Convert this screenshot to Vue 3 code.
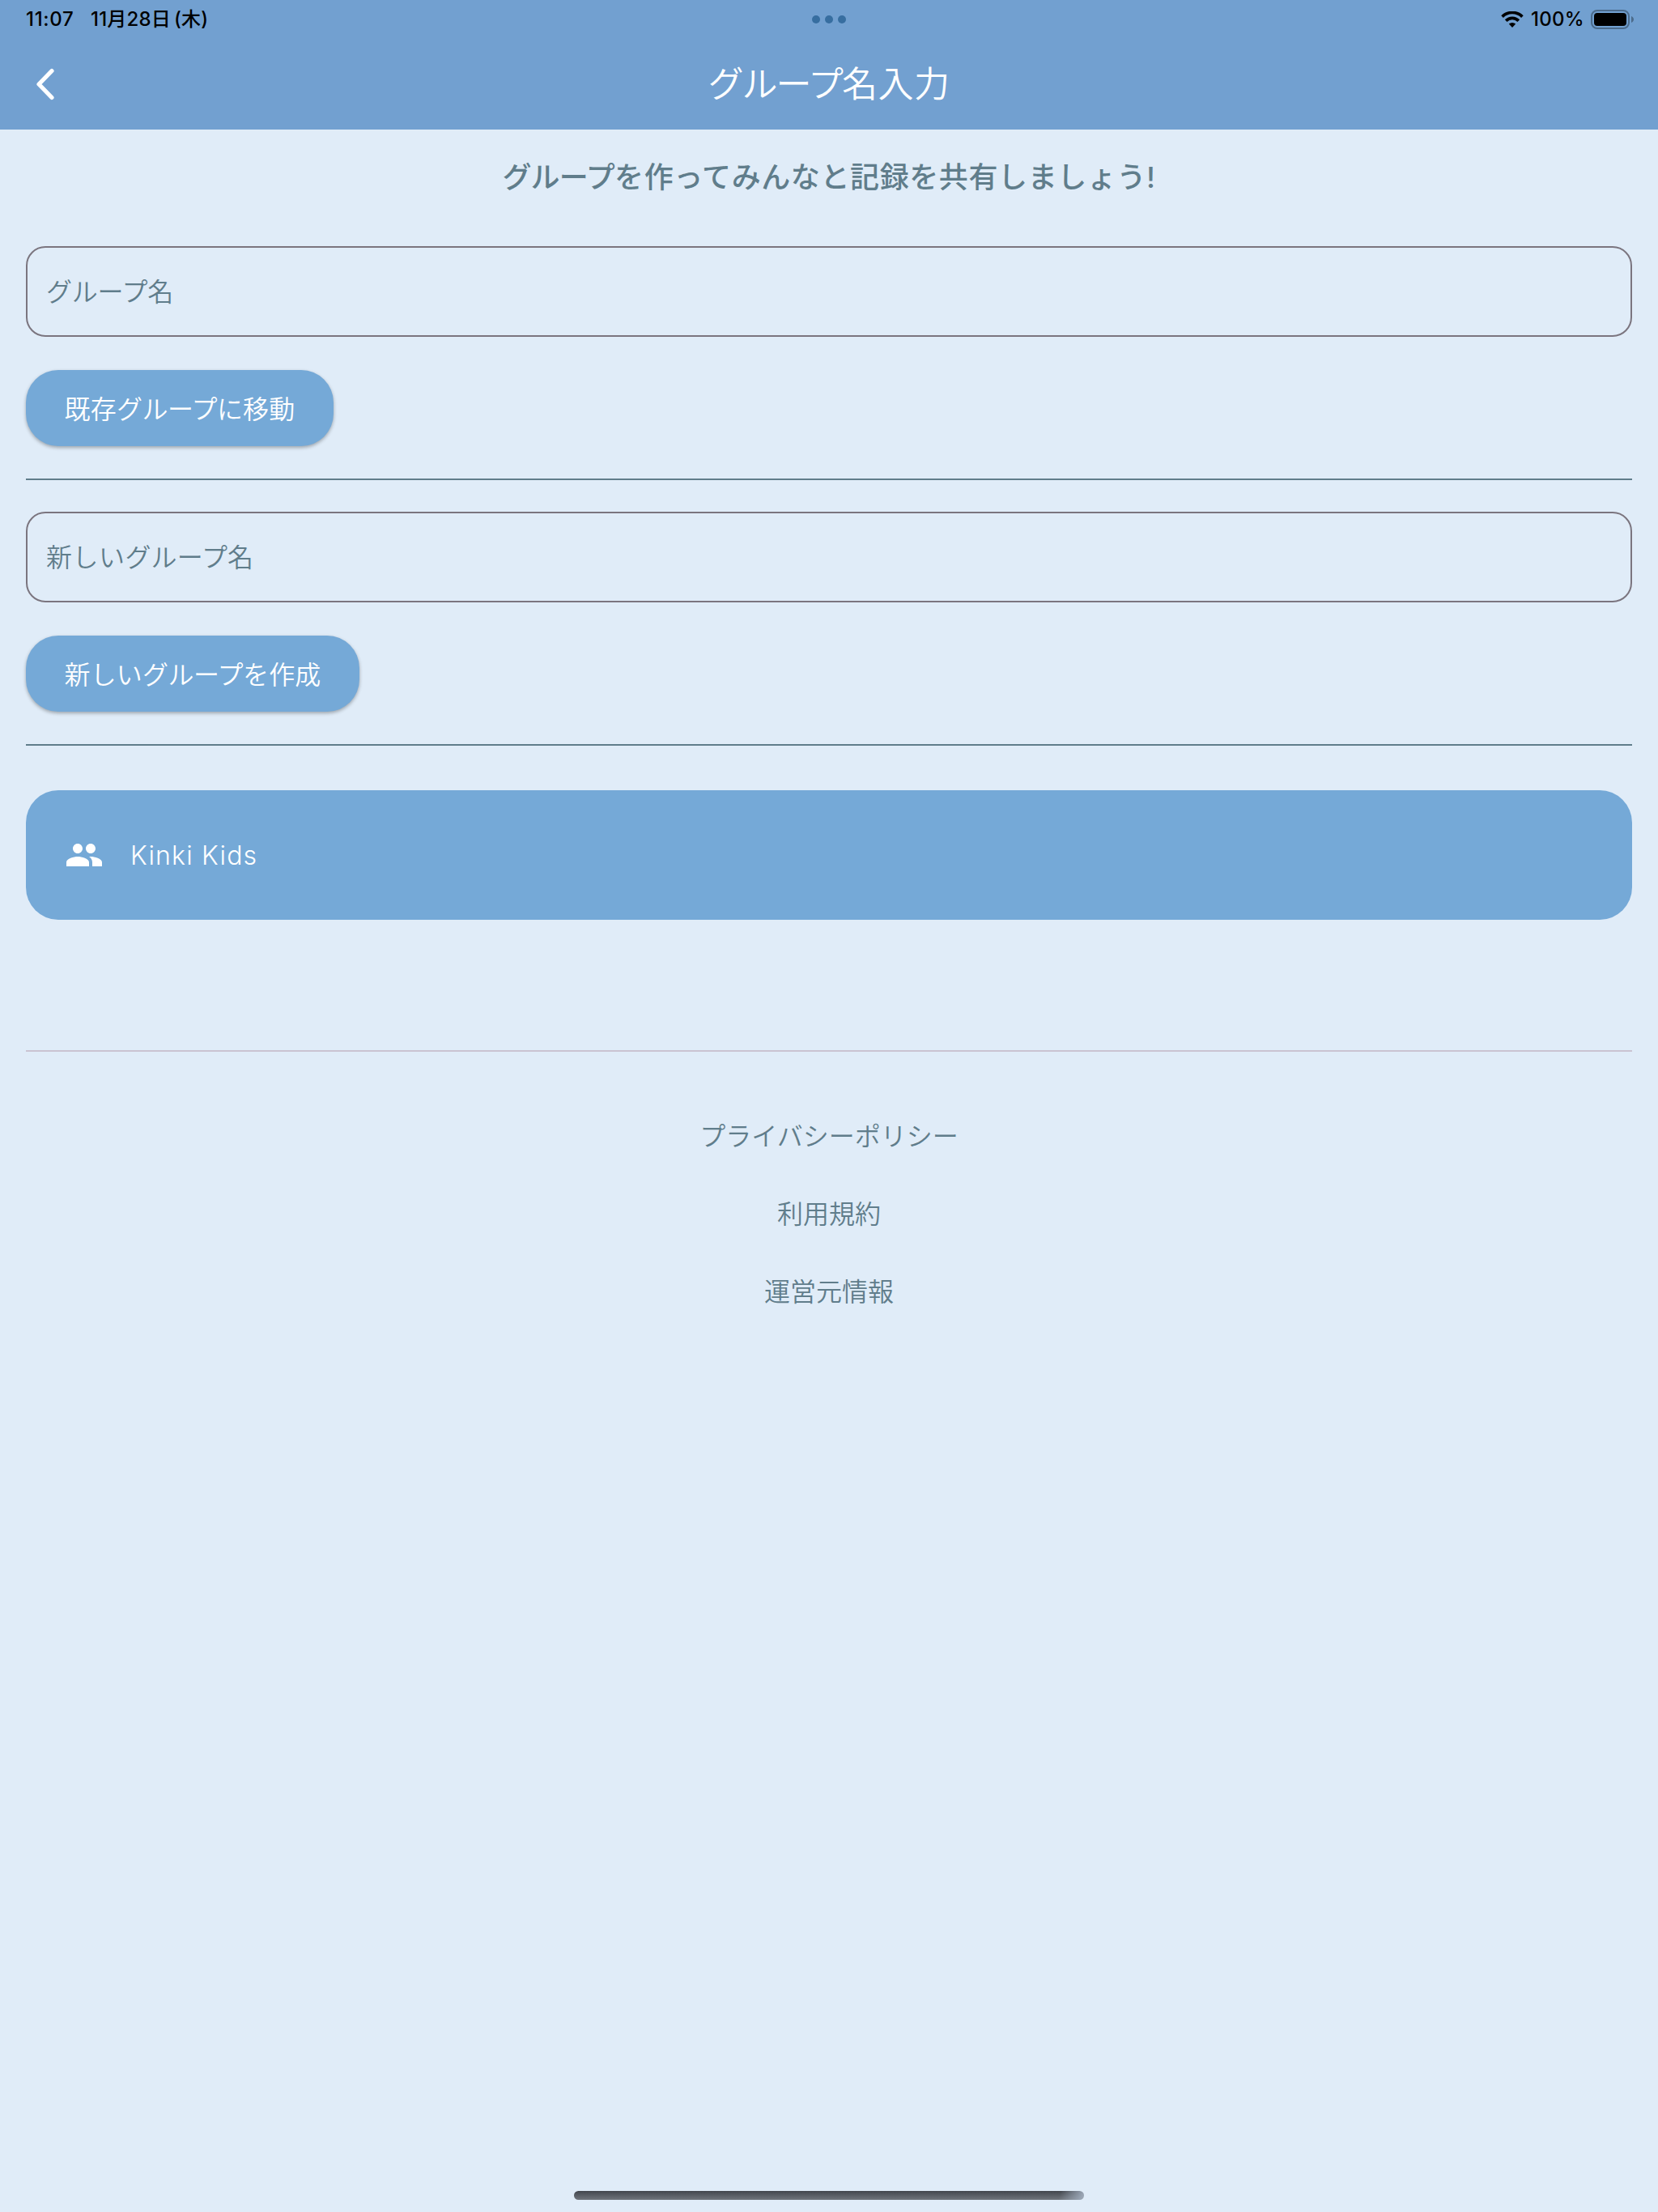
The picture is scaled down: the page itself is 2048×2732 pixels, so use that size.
<script setup>
const links = [
  { label: 'プライバシーポリシー' },
  { label: '利用規約' },
  { label: '運営元情報' },
]
const groups = ['Kinki Kids']
</script>

<template>
  <div class="screen">
    <header class="header">
      <div class="status">
        <div class="status-side">
          <span class="time">11:07</span>
          <span class="date">11月28日<span class="weekday">(木)</span></span>
        </div>
        <div class="dots"><i></i><i></i><i></i></div>
        <div class="status-side right">
          <svg class="wifi" width="28" height="20" viewBox="0 0 28 20">
            <path d="M1.600 6.600A17.600 17.600 0 0 1 26.400 6.600" fill="none" stroke="#000" stroke-width="3.700" />
            <path d="M6.200 11.600A11 11 0 0 1 21.800 11.600" fill="none" stroke="#000" stroke-width="3.700" />
            <path d="M9.800 15.600a6.200 6.200 0 0 1 8.400 0L14 20Z" fill="#000" />
          </svg>
          <span class="percent">100%</span>
          <svg class="battery" width="53" height="24" viewBox="0 0 53 24">
            <rect x="1" y="1" width="46" height="22" rx="7" fill="none" stroke="#4b6b8b" stroke-width="2" />
            <rect x="4" y="4" width="40" height="16" rx="4" fill="#000" />
            <path d="M50 8c4 1.600 4 6.400 0 8Z" fill="#4b6b8b" />
          </svg>
        </div>
      </div>
      <div class="toolbar">
        <svg class="back" width="24" height="40" viewBox="0 0 24 40">
          <path d="M20 3.500 4 20l16 16.500" fill="none" stroke="#fff" stroke-width="5.200" stroke-linecap="round" stroke-linejoin="round" />
        </svg>
        <h1><span class="kana">グループ</span>名入力</h1>
      </div>
    </header>

    <main class="content">
      <p class="lead"><span class="kana">グループ</span>を作ってみんなと記録を共有しましょう!</p>

      <div class="field"><span class="kana">グループ</span>名</div>
      <button class="button move"><span>既存<span class="kana">グループ</span>に移動</span></button>
      <hr>

      <div class="field wide">新しい<span class="kana">グループ</span>名</div>
      <button class="button create"><span>新しい<span class="kana">グループ</span>を作成</span></button>
      <hr>

      <div v-for="g in groups" :key="g" class="card">
        <svg width="48" height="48" viewBox="0 0 24 24" fill="#fff">
          <path d="M16 11c1.660 0 2.990-1.340 2.990-3S17.660 5 16 5c-1.660 0-3 1.340-3 3s1.340 3 3 3zm-8 0c1.660 0 2.990-1.340 2.990-3S9.660 5 8 5C6.340 5 5 6.340 5 8s1.340 3 3 3zm0 2c-2.330 0-7 1.170-7 3.500V19h14v-2.500c0-2.330-4.670-3.500-7-3.500zm8 0c-.29 0-.62.02-.97.050 1.160.84 1.970 1.970 1.970 3.450V19h6v-2.500c0-2.330-4.670-3.500-7-3.500z" />
        </svg>
        <span class="group-name">{{ g }}</span>
      </div>
      <hr class="soft">

      <nav class="links">
        <a v-for="l in links" :key="l.label">{{ l.label }}</a>
      </nav>
    </main>

    <footer class="home"><div class="home-bar"></div></footer>
  </div>
</template>

<style>
body { margin: 0; }
</style>

<style scoped>
.screen {
  width: 2048px;
  height: 2732px;
  display: flex;
  flex-direction: column;
  background: #e0ecf8;
  color: #607d8b;
  font-family: Inter, "Noto Sans CJK JP", sans-serif;
  font-size: 32px;
  font-weight: 350;
  overflow: hidden;
}
.header { height: 160px; background: #72a0d0; flex: none; }
.status {
  height: 48px;
  padding: 0 32px;
  display: grid;
  grid-template-columns: 1fr auto 1fr;
  grid-template-rows: 48px;
  align-items: center;
  color: #000;
  font-size: 24px;
  font-weight: 450;
}
.status-side { height: 48px; display: flex; align-items: center; white-space: nowrap; line-height: 48px; }
.right { justify-content: flex-end; }
.time { width: 80px; letter-spacing: 0.7px; }
.date { height: 48px; line-height: 47px; letter-spacing: 0.2px; }
.weekday { margin-left: 4px; }
.percent { margin: 0 8px 0 9px; letter-spacing: 0.3px; }
.battery { margin-right: -2px; }
.dots { display: flex; gap: 6px; }
.dots i { width: 10px; height: 10px; border-radius: 50%; background: #376ea0; }
.toolbar {
  height: 112px;
  padding: 0 44px;
  display: grid;
  grid-template-columns: 1fr auto 1fr;
  align-items: center;
}
h1 {
  margin: 0;
  color: #fff;
  font-size: 44px;
  font-weight: 350;
  line-height: 64px;
  letter-spacing: 0.5px;
}
h1 .kana { letter-spacing: -2px; }
.content { padding: 0 32px; display: flex; flex-direction: column; align-items: stretch; }
.lead {
  height: 60px;
  margin: 29px 0 55px;
  line-height: 61px;
  font-size: 36px;
  font-weight: 500;
  text-align: center;
  letter-spacing: 0.6px;
}
.lead .kana { letter-spacing: -0.8px; }
.field {
  box-sizing: border-box;
  height: 112px;
  border: 2px solid #7b757f;
  border-radius: 24px;
  padding: 0 23px;
  line-height: 109px;
  letter-spacing: 0.25px;
}
.button .kana { letter-spacing: -0.5px; }
.field .kana { letter-spacing: -0.2px; }
.field.wide { letter-spacing: 0.5px; }
.field.wide .kana { letter-spacing: 0.1px; }
.button {
  align-self: flex-start;
  height: 94px;
  margin: 41px 0 40px;
  padding: 0 0 2px;
  border: 0;
  border-radius: 40px;
  background: #75a9d7;
  box-shadow: 0 2px 4px rgba(0, 0, 0, 0.3);
  color: #fff;
  font: inherit;
  letter-spacing: 0.15px;
  text-align: center;
}
.move { width: 380px; }
.create { width: 412px; }
hr { width: 100%; height: 2px; margin: 0 0 39px; border: 0; background: #607d8b; }
.card {
  height: 160px;
  margin: 16px 0 161px;
  box-sizing: border-box;
  padding: 0 48px;
  display: flex;
  align-items: center;
  gap: 32px;
  border-radius: 40px;
  background: #75a9d7;
  color: #fff;
}
.group-name { padding: 1px 0 0 1px; font-weight: 320; letter-spacing: 1.200px; }
hr.soft { background: #cac3d2; margin: 0; }
.links { margin-top: 57px; display: flex; flex-direction: column; align-items: center; letter-spacing: 0; }
.links a { height: 96px; line-height: 96px; }
.home { margin-top: auto; height: 26px; display: flex; justify-content: center; }
.home-bar {
  width: 630px;
  height: 11px;
  border-radius: 6px;
  background: linear-gradient(105deg, transparent 95%, rgba(160, 172, 188, 0.9) 99.500%), linear-gradient(#42464d, #70757c);
}
</style>
